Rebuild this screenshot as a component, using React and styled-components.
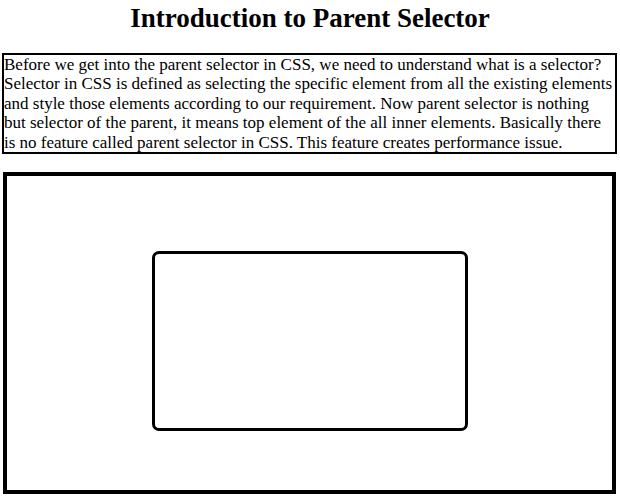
import React from "react";
import styled, { createGlobalStyle } from "styled-components";

const Global = createGlobalStyle`
  html, body { margin: 0; padding: 0; background: #fff; }
  body { font-family: "Liberation Serif", "Times New Roman", serif; color: #000; }
`;

const Page = styled.div`
  display: flex;
  flex-direction: column;
  align-items: flex-start;
  width: 620px;
`;

const Title = styled.h1`
  align-self: stretch;
  margin: 3px 0 20px;
  font-size: 27px;
  font-weight: bold;
  text-align: center;
  line-height: 30px;
`;

const Para = styled.p`
  box-sizing: border-box;
  width: 615px;
  margin: 0 0 18px 2px;
  border: 2px solid #000;
  font-size: 17px;
  line-height: 19.4px;
`;

const Line = styled.span`
  display: block;
  white-space: nowrap;
`;

const Outer = styled.div`
  box-sizing: border-box;
  width: 613px;
  height: 322px;
  margin-left: 3px;
  border: 4px solid #000;
  display: flex;
  flex-direction: column;
  align-items: center;
`;

const Inner = styled.div`
  box-sizing: border-box;
  width: 316px;
  height: 180px;
  margin-top: 75px;
  border: 3px solid #000;
  border-radius: 7px;
`;

const lines = [
  "Before we get into the parent selector in CSS, we need to understand what is a selector?",
  "Selector in CSS is defined as selecting the specific element from all the existing elements",
  "and style those elements according to our requirement. Now parent selector is nothing",
  "but selector of the parent, it means top element of the all inner elements. Basically there",
  "is no feature called parent selector in CSS. This feature creates performance issue.",
];

export default function App() {
  return (
    <>
      <Global />
      <Page>
        <Title>Introduction to Parent Selector</Title>
        <Para>
          {lines.map((l) => (
            <Line key={l}>{l}</Line>
          ))}
        </Para>
        <Outer>
          <Inner />
        </Outer>
      </Page>
    </>
  );
}
